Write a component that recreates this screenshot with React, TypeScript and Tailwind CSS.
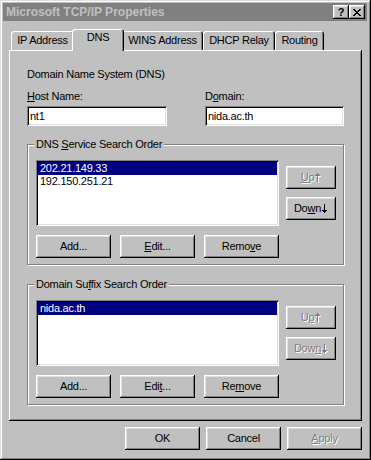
import React from 'react';

const raised =
  'shadow-[inset_-1px_-1px_0_#000,inset_1px_1px_0_#fff,inset_-2px_-2px_0_#808080,inset_2px_2px_0_#dfdfdf]';
const sunken =
  'shadow-[inset_1px_1px_0_#808080,inset_-1px_-1px_0_#fff,inset_2px_2px_0_#000,inset_-2px_-2px_0_#dfdfdf]';
const dis = 'text-[#808080] [text-shadow:1px_1px_0_#fff]';

const upPath = 'M2 0h1v1H2zM1 1h3v1H1zM0 2h5v1H0zM2 3h1v6H2z';
const downPath = 'M2 0h1v6H2zM0 6h5v1H0zM1 7h3v1H1zM2 8h1v1H2z';

function Arrow({ dir, disabled }: { dir: 'up' | 'down'; disabled: boolean }) {
  const d = dir === 'up' ? upPath : downPath;
  return (
    <svg width="6" height="10" viewBox="0 0 6 10" shapeRendering="crispEdges" className="ml-[1px] inline-block align-[-1px]">
      {disabled && <path d={d} fill="#fff" transform="translate(1 1)" />}
      <path d={d} fill={disabled ? '#808080' : '#000'} />
    </svg>
  );
}

function Btn({
  children,
  disabled = false,
  wide = true,
}: {
  children: React.ReactNode;
  disabled?: boolean;
  wide?: boolean;
}) {
  return (
    <div
      className={`flex h-[23px] shrink-0 items-center justify-center bg-[#c0c0c0] leading-[13px] ${raised} ${
        wide ? 'w-[75px]' : 'w-[50px]'
      } ${disabled ? dis : 'text-black'}`}
    >
      <span className="flex items-center">{children}</span>
    </div>
  );
}

function Tab({ label, w, selected = false }: { label: string; w: string; selected?: boolean }) {
  if (selected) {
    return (
      <div
        className={`relative z-10 -mx-[2px] -mb-px flex h-[22px] shrink-0 justify-center rounded-t-[3px] bg-[#c0c0c0] pt-[2px] leading-[13px] shadow-[inset_1px_1px_0_#fff,inset_-1px_0_0_#000,inset_-2px_0_0_#808080] ${w}`}
      >
        {label}
      </div>
    );
  }
  return (
    <div
      className={`flex h-[19px] shrink-0 justify-center rounded-t-[3px] bg-[#c0c0c0] pt-[3px] leading-[13px] shadow-[inset_1px_1px_0_#fff,inset_-1px_0_0_#000,inset_-2px_0_0_#808080] ${w}`}
    >
      {label}
    </div>
  );
}

function Group({
  title,
  items,
  upDisabled,
  downDisabled,
  up,
  down,
  edit,
  remove,
}: {
  title: React.ReactNode;
  items: string[];
  upDisabled: boolean;
  downDisabled: boolean;
  up: React.ReactNode;
  down: React.ReactNode;
  edit: React.ReactNode;
  remove: React.ReactNode;
}) {
  return (
    <div className="relative flex h-[121px] w-[317px] border border-[#808080] pl-[8px] pr-[7px] pt-[15px] shadow-[1px_1px_0_#fff,inset_1px_1px_0_#fff]">
      <span className="absolute -top-[7px] left-[6px] bg-[#c0c0c0] px-[2px] leading-[13px]">{title}</span>
      <div className="flex w-[243px] flex-col">
        <div className={`flex h-[66px] flex-col bg-white p-[2px] ${sunken}`}>
          {items.map((it, i) => (
            <div
              key={it}
              className={`h-[13px] pl-[2px] leading-[13px] ${i === 0 ? 'bg-[#000080] text-white' : 'text-black'}`}
            >
              {it}
            </div>
          ))}
        </div>
        <div className="mt-[9px] flex gap-[9px]">
          <Btn>Add...</Btn>
          <Btn>{edit}</Btn>
          <Btn>{remove}</Btn>
        </div>
      </div>
      <div className="ml-[7px] mt-[6px] flex flex-col gap-[8px]">
        <Btn wide={false} disabled={upDisabled}>
          {up}
          <Arrow dir="up" disabled={upDisabled} />
        </Btn>
        <Btn wide={false} disabled={downDisabled}>
          {down}
          <Arrow dir="down" disabled={downDisabled} />
        </Btn>
      </div>
    </div>
  );
}

export default function App() {
  return (
    <div className="h-[460px] w-[371px] bg-[#c0c0c0] pl-[3px] pr-[4px] pt-[3px] font-['Liberation_Sans',Arial,sans-serif] text-[11px] tracking-[-0.25px] text-black shadow-[inset_-1px_-1px_0_#000,inset_1px_1px_0_#dfdfdf,inset_-2px_-2px_0_#808080,inset_2px_2px_0_#fff]">
      {/* Title bar */}
      <div className="flex h-[18px] items-center bg-[#808080] pl-[3px] pr-[2px]">
        <span className="flex-1 text-[12px] font-bold leading-[14px] tracking-normal text-[#c0c0c0]">
          Microsoft TCP/IP Properties
        </span>
        <div className={`flex h-[14px] w-[16px] items-center justify-center bg-[#c0c0c0] ${raised}`}>
          <span className="text-[11px] font-bold leading-[11px] text-black">?</span>
        </div>
        <div className={`flex h-[14px] w-[16px] items-center justify-center bg-[#c0c0c0] ${raised}`}>
          <svg width="8" height="7" viewBox="0 0 8 7" shapeRendering="crispEdges">
            <path
              d="M0 0h2v1H0zM6 0h2v1H6zM1 1h2v1H1zM5 1h2v1H5zM2 2h4v1H2zM3 3h2v1H3zM2 4h4v1H2zM1 5h2v1H1zM5 5h2v1H5zM0 6h2v1H0zM6 6h2v1H6z"
              fill="#000"
            />
          </svg>
        </div>
      </div>

      {/* Tabs */}
      <div className="ml-[8px] mt-[8px] flex items-end">
        <Tab label="IP Address" w="w-[63px]" />
        <Tab label="DNS" w="w-[52px]" selected />
        <Tab label="WINS Address" w="w-[81px]" />
        <Tab label="DHCP Relay" w="w-[72px]" />
        <Tab label="Routing" w="w-[49px]" />
      </div>

      {/* Panel */}
      <div className="ml-[6px] mr-[5px] h-[371px] bg-[#c0c0c0] pl-[18px] pt-[18px] shadow-[inset_-1px_-1px_0_#000,inset_1px_1px_0_#fff,inset_-2px_-2px_0_#808080]">
        <div className="leading-[13px]">Domain Name System (DNS)</div>
        <div className="mt-[9px] flex gap-[38px]">
          <div className="flex w-[140px] flex-col">
            <div className="leading-[13px]">
              <u>H</u>ost Name:
            </div>
            <div className={`mt-[3px] flex h-[20px] items-center bg-white pl-[3px] leading-[13px] ${sunken}`}>nt1</div>
          </div>
          <div className="flex w-[139px] flex-col">
            <div className="leading-[13px]">
              D<u>o</u>main:
            </div>
            <div className={`mt-[3px] flex h-[20px] items-center bg-white pl-[3px] leading-[13px] ${sunken}`}>
              nida.ac.th
            </div>
          </div>
        </div>

        <div className="mt-[18px]">
          <Group
            title={
              <>
                DNS <u>S</u>ervice Search Order
              </>
            }
            items={['202.21.149.33', '192.150.251.21']}
            upDisabled
            downDisabled={false}
            up={
              <span>
                <u>U</u>p
              </span>
            }
            down={
              <span>
                Do<u>w</u>n
              </span>
            }
            edit={
              <>
                <u>E</u>dit...
              </>
            }
            remove={
              <>
                Remo<u>v</u>e
              </>
            }
          />
        </div>
        <div className="mt-[19px]">
          <Group
            title={
              <>
                Domain Su<u>f</u>fix Search Order
              </>
            }
            items={['nida.ac.th']}
            upDisabled
            downDisabled
            up={
              <span>
                U<u>p</u>
              </span>
            }
            down={
              <span>
                Dow<u>n</u>
              </span>
            }
            edit={
              <>
                Edi<u>t</u>...
              </>
            }
            remove={
              <>
                Re<u>m</u>ove
              </>
            }
          />
        </div>
      </div>

      {/* Bottom buttons */}
      <div className="mr-[5px] mt-[6px] flex justify-end gap-[6px]">
        <Btn>OK</Btn>
        <Btn>Cancel</Btn>
        <Btn disabled>
          <span>
            <u>A</u>pply
          </span>
        </Btn>
      </div>
    </div>
  );
}
